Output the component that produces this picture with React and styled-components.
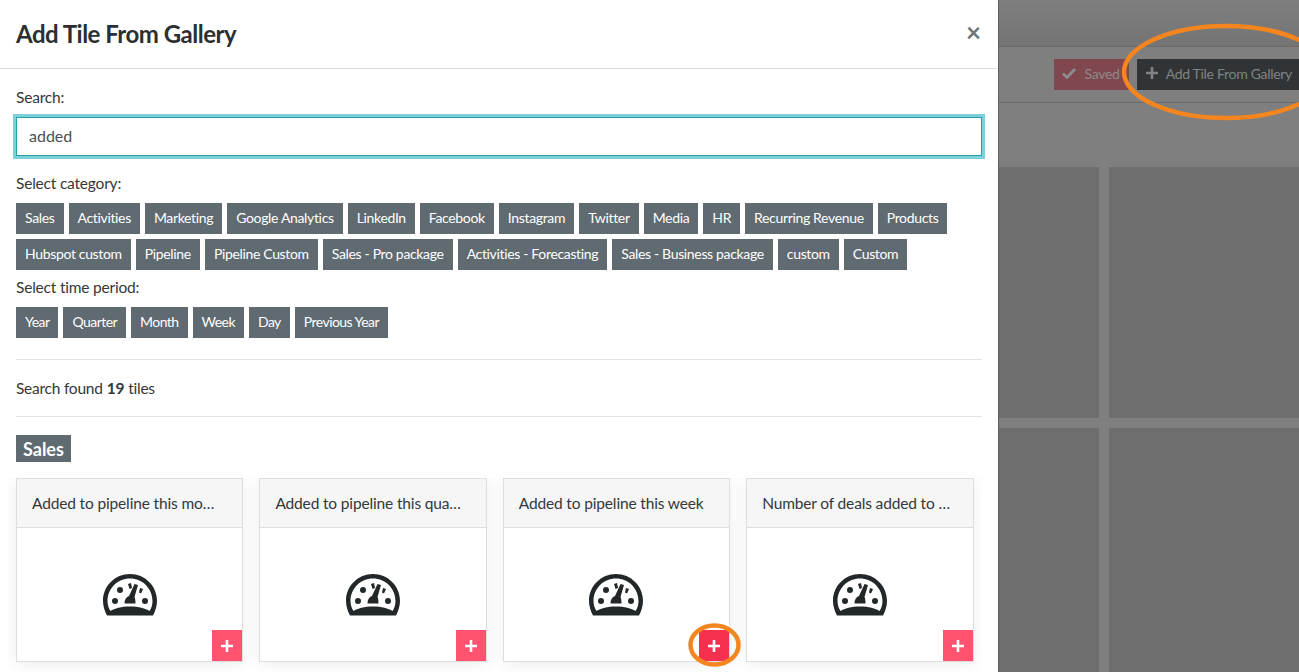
import React from 'react';
import styled, { createGlobalStyle } from 'styled-components';

const Global = createGlobalStyle`
  html, body {
    margin: 0;
    height: 672px;
    overflow: hidden;
    background: #fff;
    font-family: "Lato", "Noto Sans", sans-serif;
    color: #2b2f31;
  }
  * { box-sizing: border-box; }
`;

const Page = styled.div`
  position: relative;
  display: flex;
  width: 1299px;
  height: 672px;
  overflow: hidden;
`;

const Modal = styled.div`
  flex: 0 0 998px;
  height: 672px;
  background: #fff;
  overflow: hidden;
`;

const ModalHeader = styled.div`
  height: 69px;
  border-bottom: 1px solid #dbe0e4;
  padding: 0 17px 2px 16px;
  display: flex;
  align-items: center;
  justify-content: space-between;
`;

const Title = styled.h4`
  margin: 0;
  font-size: 24px;
  font-weight: 700;
  letter-spacing: -0.5px;
  color: #2b2f31;
`;

const Close = styled.span`
  font-size: 26px;
  font-weight: 700;
  color: #6f7477;
  line-height: 1;
  margin-bottom: 3px;
`;

const Body = styled.div`
  padding: 19px 16px 0;
`;

const Label = styled.div`
  height: 20px;
  font-size: 15.5px;
  line-height: 19px;
  letter-spacing: -0.2px;
  color: #33383b;
`;

const SearchInput = styled.div`
  height: 39px;
  margin: 9px 0 18px;
  padding: 0 12px 2px;
  display: flex;
  align-items: center;
  border: 1px solid #21a0ad;
  box-shadow: 0 0 0 3px #7fcfd8;
  font-size: 16px;
  color: #4a5054;
`;

const TagRows = styled.div`
  display: flex;
  flex-wrap: wrap;
  gap: 5px;
  margin: ${(p) => p.$top}px 0 ${(p) => p.$bottom}px;
`;

const Tag = styled.span`
  height: 31px;
  padding: 0 9px 2px;
  display: flex;
  align-items: center;
  background: #5f6a71;
  color: #fff;
  font-size: 14px;
  letter-spacing: ${(p) => (p.$tight ? '-0.55px' : '-0.34px')};
  white-space: nowrap;
`;

const Rule = styled.hr`
  margin: 0;
  border: 0;
  border-top: 1px solid #e2e2e2;
`;

const Found = styled.div`
  height: 56px;
  display: flex;
  align-items: center;
  gap: 4px;
  font-size: 15.5px;
  letter-spacing: -0.24px;
  color: #33383b;
  b { font-weight: 700; }
`;

const SectionBadge = styled.div`
  display: flex;
  align-items: center;
  width: fit-content;
  height: 27px;
  margin: 18px 0 16px;
  padding: 0 7px;
  background: #5f6a71;
  color: #fff;
  font-size: 18px;
  font-weight: 700;
`;

const Gallery = styled.div`
  display: grid;
  grid-template-columns: repeat(4, minmax(0, 1fr));
  gap: 16px;
  width: 974px;
  height: 194px;
  margin-left: -8px;
  padding: 0 8.5px 0 8px;
  overflow: hidden;
`;

const Card = styled.div`
  position: relative;
  height: 184px;
  border: 1px solid #dedede;
  background: #fff;
  box-shadow: 0 2px 14px rgba(40, 60, 70, 0.09);
`;

const CardHead = styled.div`
  height: 49px;
  padding: 0 20px 0 15px;
  line-height: 49px;
  background: #f6f6f6;
  border-bottom: 1px solid #dedede;
  font-size: 15.5px;
  letter-spacing: -0.15px;
  color: #33383b;
  white-space: nowrap;
  overflow: hidden;
  text-overflow: ellipsis;
`;

const CardBody = styled.div`
  height: 133px;
  display: flex;
  justify-content: center;
  padding-top: 46px;
`;

const AddButton = styled.span`
  position: absolute;
  right: 0;
  bottom: 0;
  width: 30px;
  height: 31px;
  display: flex;
  align-items: center;
  justify-content: center;
  background: ${(p) => (p.$active ? '#f5304f' : '#ff5370')};
`;

const BackDrop = styled.div`
  flex: 1;
  min-width: 0;
  height: 672px;
  background: #7f7f7f;
  border-left: 1px solid #5e5e5e;
  display: flex;
  flex-direction: column;
`;

const TopBar = styled.div`
  height: 47px;
  flex: none;
  background: linear-gradient(#7f7f7f, #747474);
  border-bottom: 1px solid #6c6c6c;
`;

const ToolBar = styled.div`
  height: 56px;
  flex: none;
  border-bottom: 1px solid #6c6c6c;
  display: flex;
  align-items: center;
  justify-content: flex-end;
  gap: 8px;
  padding-bottom: 1px;
  margin-right: -2px;
`;

const ToolButton = styled.span`
  height: 31px;
  padding: 0 9px 2px 8px;
  display: flex;
  align-items: center;
  gap: 7px;
  font-size: 14px;
  letter-spacing: -0.3px;
  white-space: nowrap;
  color: ${(p) => (p.$dark ? '#808485' : '#8f8a8b')};
  background: ${(p) => (p.$dark ? '#303436' : '#80474f')};
`;

const TileGrid = styled.div`
  display: grid;
  grid-template-columns: 100px 200px;
  grid-auto-rows: 251px;
  gap: 10px;
  margin-top: 64px;
`;

const Tile = styled.div`
  background: #6e6e6e;
`;

const Callouts = styled.svg`
  position: absolute;
  inset: 0;
  pointer-events: none;
`;

const categories = [
  'Sales', 'Activities', 'Marketing', 'Google Analytics', 'LinkedIn', 'Facebook', 'Instagram',
  'Twitter', 'Media', 'HR', 'Recurring Revenue', 'Products', 'Hubspot custom', 'Pipeline',
  'Pipeline Custom', 'Sales - Pro package', 'Activities - Forecasting', 'Sales - Business package',
  'custom', 'Custom',
];

const periods = ['Year', 'Quarter', 'Month', 'Week', 'Day', 'Previous Year'];

const tiles = [
  { title: 'Added to pipeline this month value' },
  { title: 'Added to pipeline this quarter value' },
  { title: 'Added to pipeline this week', active: true },
  { title: 'Number of deals added to pipeline' },
];

const Gauge = () => (
  <svg width="54" height="42" viewBox="0 0 54 42" fill="#22272a">
    <path
      fillRule="evenodd"
      d="M4 41.500C1.500 37 0 31.500 0 27 0 12 12 0 27 0s27 12 27 27c0 4.500-1.500 10-4 14.500ZM7.500 37c4-2.500 11-4.500 19.500-4.500S42.500 34.500 46.500 37c2-3 3-6.500 3-10C49.500 14.500 39.500 4.500 27 4.500S4.500 14.500 4.500 27c0 3.500 1 7 3 10Z"
    />
    <circle cx="12" cy="27" r="3" />
    <circle cx="17" cy="16" r="3" />
    <circle cx="42" cy="27" r="3" />
    <path d="M25 10l3-1 1 5-2.500 1ZM37 14l3 1-2 4.500-2-1Z" />
    <path d="M31.500 10l3.500 1-3.500 12c.8 1.500 1 4 1 6.500h-11c0-4 1.500-6.500 4.500-7.500Z" />
  </svg>
);

const Plus = ({ size = 14, color = '#fff' }) => (
  <svg width={size} height={size} viewBox="0 0 14 14" fill={color}>
    <path d="M5.700 1h2.600v4.700H13v2.600H8.300V13H5.700V8.300H1V5.700h4.700Z" />
  </svg>
);

const Check = () => (
  <svg width="16" height="12" viewBox="0 0 16 12" fill="none" stroke="#8f8a8b" strokeWidth="2.800">
    <path d="M1 6.500l4 4L13 2" />
  </svg>
);

export default function App() {
  return (
    <Page>
      <Global />
      <Modal>
        <ModalHeader>
          <Title>Add Tile From Gallery</Title>
          <Close>×</Close>
        </ModalHeader>
        <Body>
          <Label>Search:</Label>
          <SearchInput>added</SearchInput>
          <Label>Select category:</Label>
          <TagRows $top={9} $bottom={8}>
            {categories.map((c) => (
              <Tag key={c}>{c}</Tag>
            ))}
          </TagRows>
          <Label>Select time period:</Label>
          <TagRows $top={9} $bottom={21}>
            {periods.map((c) => (
              <Tag key={c} $tight>{c}</Tag>
            ))}
          </TagRows>
          <Rule />
          <Found>
            Search found <b>19</b> tiles
          </Found>
          <Rule />
          <SectionBadge>Sales</SectionBadge>
          <Gallery>
            {tiles.map((t) => (
              <Card key={t.title}>
                <CardHead>{t.title}</CardHead>
                <CardBody>
                  <Gauge />
                </CardBody>
                <AddButton $active={t.active}>
                  <Plus />
                </AddButton>
              </Card>
            ))}
          </Gallery>
        </Body>
      </Modal>
      <BackDrop>
        <TopBar />
        <ToolBar>
          <ToolButton>
            <Check />
            Saved
          </ToolButton>
          <ToolButton $dark>
            <Plus size={14} color="#808485" />
            Add Tile From Gallery
          </ToolButton>
        </ToolBar>
        <TileGrid>
          <Tile />
          <Tile />
          <Tile />
          <Tile />
        </TileGrid>
      </BackDrop>
      <Callouts width="1299" height="672" viewBox="0 0 1299 672" fill="none" stroke="#f5851f">
        <ellipse cx="1226" cy="72" rx="102" ry="46" strokeWidth="4.500" />
        <ellipse cx="714.500" cy="645" rx="24" ry="19.500" strokeWidth="4.500" />
      </Callouts>
    </Page>
  );
}
